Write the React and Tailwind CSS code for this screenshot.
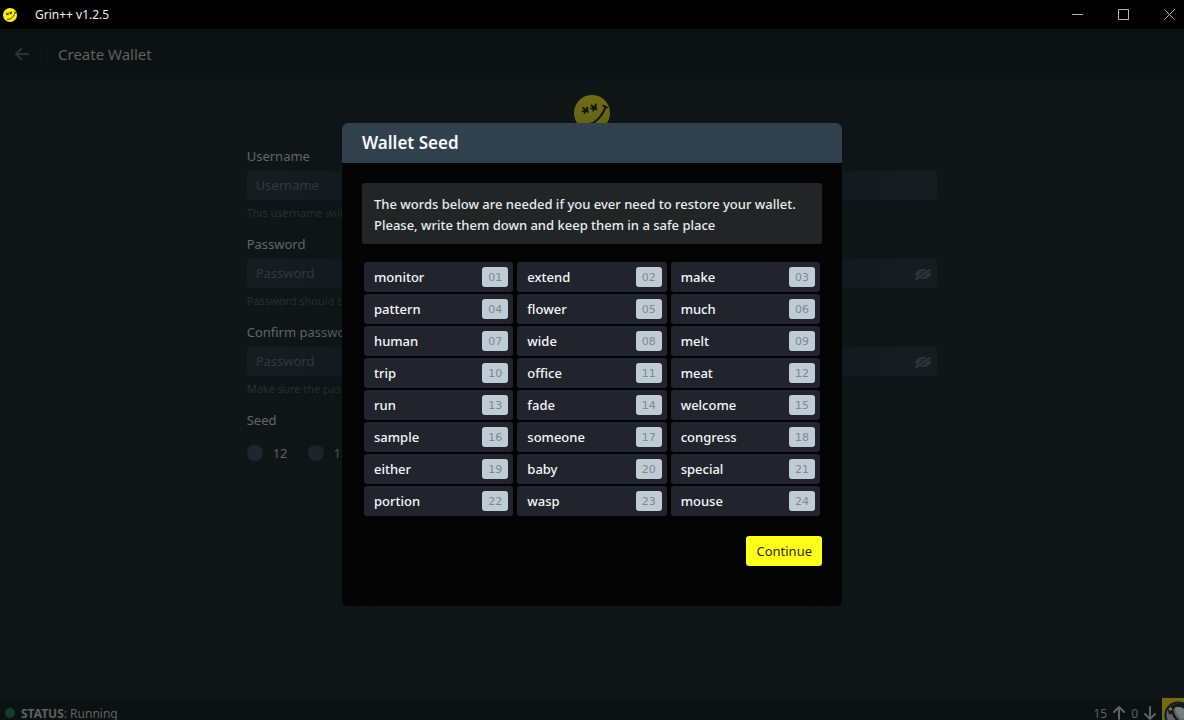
import React from "react";

const WORDS = [
  "monitor", "extend", "make", "pattern", "flower", "much", "human", "wide",
  "melt", "trip", "office", "meat", "run", "fade", "welcome", "sample",
  "someone", "congress", "either", "baby", "special", "portion", "wasp", "mouse",
];

function Smiley({ className }) {
  return (
    <svg viewBox="0 0 36 36" className={className} aria-hidden="true">
      <circle cx="18" cy="18" r="18" fill="#fff21a" />
      <g stroke="#0c0f04" strokeWidth="1.7" strokeLinecap="round" fill="none">
        <path d="M9 13l5 4M13.500 12.500L10.500 18M8.500 16.500l5-1.500" />
        <path d="M17.500 10.500l5 4M22 9.500l-3 6M17 13.500l5-1.500" />
        <path d="M29 10.500l4 2" />
        <path d="M31.500 12C29 19 25 24 20 27.500 17 29 14 29.500 11 29" strokeWidth="2" />
      </g>
    </svg>
  );
}

function BirdLogo({ className }) {
  return (
    <svg viewBox="0 0 30 30" className={className} aria-hidden="true">
      <rect width="30" height="30" fill="#776812" />
      <circle cx="16" cy="17" r="12.500" fill="#5f6466" stroke="#14191a" strokeWidth="2" />
      <path d="M6 12c2-4 6-6.500 11-6.500 6 0 10 4 11 9l-5-3c-3-3-8-3.500-11-1l-2 5-3 1z" fill="#14191a" />
      <circle cx="8.500" cy="11" r="1.600" fill="#9c8714" />
      <path d="M13 9.500c4-1.500 8 0 11 4l1.500 5-5 3c-4-3-7-7-7.500-12z" fill="#777c7e" />
      <path d="M10.500 13c1 6 5 10 10 13" stroke="#14191a" strokeWidth="2.500" fill="none" />
    </svg>
  );
}

function ArrowIcon({ d, className }) {
  return (
    <svg viewBox="0 0 16 16" className={className} fill="none" stroke="currentColor" strokeWidth="2" strokeLinecap="round" strokeLinejoin="round" aria-hidden="true">
      <path d={d} />
    </svg>
  );
}

function EyeOff({ id }) {
  return (
    <svg viewBox="0 0 16 16" className="size-4" fill="currentColor" aria-hidden="true">
      <mask id={id}>
        <rect width="16" height="16" fill="white" />
        <circle cx="8" cy="8" r="2.600" stroke="black" strokeWidth="1" fill="white" />
        <path d="M0 14L16 3" stroke="black" strokeWidth="3.200" />
      </mask>
      <path mask={`url(#${id})`} d="M0 8c1.500-3.200 4.600-5 8-5s6.500 1.800 8 5c-1.500 3.200-4.600 5-8 5S1.500 11.200 0 8z" />
      <path d="M1.200 13.200L14.800 3.800" stroke="currentColor" strokeWidth="2.200" strokeLinecap="round" />
    </svg>
  );
}

function Field({ id, label, placeholder, type, help, hidden }) {
  return (
    <div className="mb-[13px]">
      <label htmlFor={id} className="block h-5 text-[13px] leading-5 text-[#626767]">{label}</label>
      <div className="mt-[5px] flex h-[29px] items-center rounded-sm bg-[#161c1f] px-[9px]">
        <input
          id={id}
          type={type}
          placeholder={placeholder}
          className="min-w-0 flex-1 bg-transparent text-[13px] outline-none placeholder:text-[#323a3f]"
        />
        {hidden && (
          <button type="button" aria-label="Show password" className="-mr-[3px] text-[#2b363a]">
            <EyeOff id={`${id}-eye`} />
          </button>
        )}
      </div>
      <p className="mt-[5px] h-4 text-[11px] leading-4 text-[#263035]">{help}</p>
    </div>
  );
}

function SeedDialog() {
  return (
    <section
      role="dialog"
      aria-labelledby="seed-title"
      className="absolute top-[123px] left-1/2 w-[500px] -translate-x-1/2 overflow-hidden rounded-md bg-[#040404] pb-10 shadow-[0_18px_46px_6px_rgba(12,20,28,0.4)]"
    >
      <header className="flex h-10 items-center bg-[#30404d] px-5">
        <h2 id="seed-title" className="text-[17px] font-semibold text-[#f5f8fa]">Wallet Seed</h2>
      </header>
      <div className="px-5 pt-5">
        <p className="rounded-[3px] bg-[#212526] px-3 pt-[11px] pb-2 text-[13px] leading-[21px] font-medium text-[#e9edee]">
          The words below are needed if you ever need to restore your wallet. Please, write them down and keep them in a safe place
        </p>
        <ol className="mt-4 grid grid-cols-3 gap-x-1 gap-y-0.5 p-0.5">
          {WORDS.map((word, i) => (
            <li key={word} className="flex h-[30px] items-center justify-between rounded-[3px] bg-[#21242c] pr-[5px] pl-2.5 text-[13px] leading-5 font-medium text-[#f5f8fa]">
              {word}
              <span className="h-5 w-[26px] rounded-[3px] bg-[#bfccd6] text-center font-['DejaVu_Sans'] text-[11px] leading-[21px] font-normal text-[#81878b]">
                {String(i + 1).padStart(2, "0")}
              </span>
            </li>
          ))}
        </ol>
        <div className="mt-[18px] flex justify-end">
          <button type="button" className="h-[30px] rounded-[3px] bg-[#ffff1c] px-2.5 text-[13px] leading-[30px] text-[#2b2b12]">Continue</button>
        </div>
      </div>
    </section>
  );
}

export default function App() {
  return (
    <div className="relative flex h-screen flex-col overflow-hidden bg-[#101616] font-['Noto_Sans',sans-serif]">
      <header className="flex h-[29px] shrink-0 items-center bg-black pl-[3px] text-[#eeeeee]">
        <Smiley className="size-3.5" />
        <span className="ml-[18px] flex-1 text-[12px]">Grin++ v1.2.5</span>
        <div className="flex h-full text-[#b4b4b4]">
          {[["Minimize", "M0 5.500h11"], ["Maximize", "M.5.5h10v10H.5z"], ["Close", "M.5.5l10 10M10.500.5l-10 10"]].map(([name, d]) => (
            <button key={name} type="button" aria-label={name} className="flex w-[46px] items-center justify-center last:-mr-2">
              <svg viewBox="0 0 11 11" className="size-[11px]" fill="none" stroke="currentColor"><path d={d} /></svg>
            </button>
          ))}
        </div>
      </header>
      <nav className="flex h-[50px] shrink-0 items-center bg-[#0c1111] pl-3.5">
        <button type="button" aria-label="Back" className="text-[#2a3337]">
          <ArrowIcon className="size-4" d="M14 8H2M7 3L2 8l5 5" />
        </button>
        <span className="ml-[17px] h-5 w-px bg-[#101516]" />
        <h1 className="ml-2.5 text-[15px] text-[#5d6262]">Create Wallet</h1>
      </nav>
      <main className="min-h-0 flex-1 pt-4">
        <Smiley className="mx-auto size-9 opacity-40" />
        <form className="mx-auto mt-[15px] w-7/12" onSubmit={(e) => e.preventDefault()}>
          <Field id="username" label="Username" placeholder="Username" type="text" help="This username will be used to sign in" />
          <Field id="password" label="Password" placeholder="Password" type="password" help="Password should be strong" hidden />
          <Field id="confirm" label="Confirm password" placeholder="Password" type="password" help="Make sure the passwords match" hidden />
          <fieldset>
            <legend className="h-5 text-[13px] leading-5 text-[#626767]">Seed</legend>
            <div className="mt-[13px] flex gap-5">
              {[12, 15, 18, 21, 24].map((n) => (
                <label key={n} className="flex items-center gap-2.5 text-[13px] leading-5 text-[#5d6262]">
                  <input type="radio" name="seed" value={n} className="size-4 appearance-none rounded-full bg-[#1d272c]" />
                  {n}
                </label>
              ))}
            </div>
          </fieldset>
        </form>
      </main>
      <footer className="flex h-[22px] shrink-0 items-start overflow-hidden bg-[#0c1111] pl-[5px] text-[12px] leading-[31px] text-[#5d6262]">
        <span className="mt-2.5 size-2.5 rounded-full bg-[#10402c]" />
        <p className="ml-1.5 flex-1"><strong>STATUS</strong>: Running</p>
        <span>15</span>
        <ArrowIcon className="mx-1 mt-[7px] size-4" d="M8 14V2M3 7l5-5 5 5" />
        <span>0</span>
        <ArrowIcon className="mx-1 mt-[7px] size-4" d="M8 2v12M3 9l5 5 5-5" />
        <BirdLogo className="-mr-2 size-[30px] shrink-0" />
      </footer>
      <SeedDialog />
    </div>
  );
}
